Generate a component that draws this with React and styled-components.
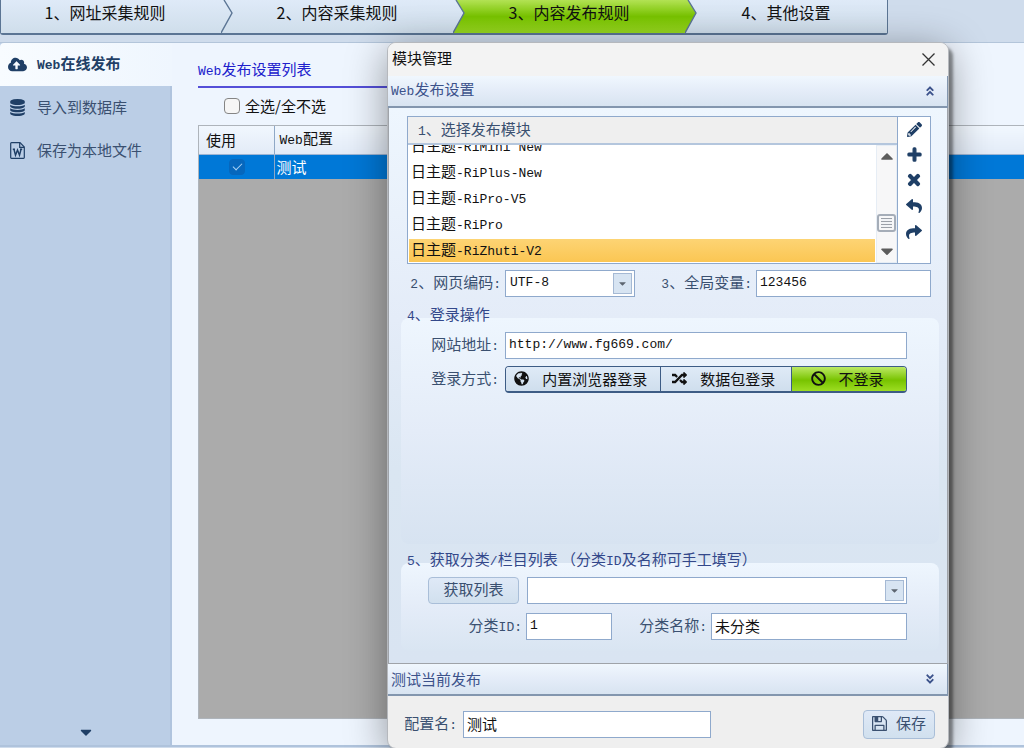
import React from 'react';
import styled, { createGlobalStyle, css } from 'styled-components';
import {
	FaAngleDoubleDown,
	FaAngleDoubleUp,
	FaBan,
	FaCaretDown,
	FaCaretUp,
	FaCloudUploadAlt,
	FaGlobeAmericas,
	FaPencilAlt,
	FaPlus,
	FaRandom,
	FaReply,
	FaShare,
	FaTimes
} from 'react-icons/fa';

const navy = '#1f3f66';
const label = '#3a5070';
const line = '#8fa9cc';
const bar = 'linear-gradient(#f0f7fe, #e4ecf8 50%, #d8e4f1)';

const GlobalStyle = createGlobalStyle`
  * {
    box-sizing: border-box;
  }

  body {
    margin: 0;
    overflow: hidden;
    background: #cfdcec;
    font: 15px/20px "Noto Sans CJK SC", sans-serif;
    color: #111;
  }

  button, input, select {
    font: inherit;
    color: inherit;
  }
`;

const Latin = styled.span`
  font-family: "Liberation Mono", monospace;
  font-size: 13px;
`;

const Page = styled.div`
  position: relative;
  display: flex;
  flex-direction: column;
  min-height: 100vh;
`;

/* wizard steps */

const Steps = styled.nav`
  display: flex;
  align-self: flex-start;
  height: 35px;
  margin-bottom: 7px;
  border: 1px solid #5b7594;
  border-width: 0 1px 2px 1px;
  border-radius: 0 0 3px 3px;
`;

const Step = styled.button`
  width: ${props => (props.$last ? 190 : 220)}px;
  padding: 0 12px 10px 0;
  border: 0;
  font-size: 16px;
  background: ${props =>
		props.$active
			? 'linear-gradient(#b2e254, #78c300 50%, #98d820)'
			: 'linear-gradient(#dfeaf8, #cfdeeb)'};
`;

const Chevron = styled.svg`
  display: block;
  flex: none;
`;

const StepArrow = ({ from, to }) => (
	<Chevron width="12" height="33" viewBox="0 0 12 33">
		<defs>
			<linearGradient id="plain" x1="0" y1="0" x2="0" y2="33" gradientUnits="userSpaceOnUse">
				<stop offset="0" stopColor="#dfeaf8" />
				<stop offset="1" stopColor="#cfdeeb" />
			</linearGradient>
			<linearGradient id="green" x1="0" y1="0" x2="0" y2="33" gradientUnits="userSpaceOnUse">
				<stop offset="0" stopColor="#b2e254" />
				<stop offset="0.5" stopColor="#78c300" />
				<stop offset="1" stopColor="#98d820" />
			</linearGradient>
		</defs>
		<path d="M0 0H12V33H0Z" fill={`url(#${to})`} />
		<path d="M0 0H3L11 13L0 33Z" fill={`url(#${from})`} />
		<path d="M3 0L11 13L0 33" fill="none" stroke="#5b7594" strokeWidth="1.4" />
	</Chevron>
);

/* main window */

const Main = styled.main`
  display: flex;
  flex: 1;
  margin-bottom: 1px;
  border-top: 1px solid #b3c5da;
  border-bottom: 2px solid #afc3dc;
`;

const Sidebar = styled.nav`
  display: flex;
  flex-direction: column;
  width: 172px;
  background: #bbcee6;
  box-shadow: inset -2px 0 #b0c4de;
`;

const SideItem = styled.button`
  display: flex;
  align-items: center;
  gap: 10px;
  height: 43px;
  padding: 0 8px 1px;
  border: 0;
  background: none;
  color: ${label};

  svg {
    width: 19px;
    font-size: 17px;
    color: ${navy};
  }

  ${props =>
		props.$active &&
		css`
      border-radius: 4px 0 0 0;
      background: linear-gradient(90deg, #f8fcff, #eff6fe);
      color: ${navy};
      font-weight: 700;
    `}
`;

const SideMore = styled.button`
  margin-top: auto;
  height: 26px;
  padding: 0;
  border: 0;
  background: none;
  color: ${navy};
  font-size: 18px;
  line-height: 18px;
`;

const Content = styled.section`
  display: flex;
  flex: 1;
  flex-direction: column;
  padding: 15px 0 26px 26px;
  background: #eef5fe;
`;

const ListTitle = styled.h2`
  width: 50%;
  height: 30px;
  margin: 0;
  padding-top: 1px;
  border-bottom: 2px solid #544fd8;
  color: #2020cc;
  font-size: 15px;
  font-weight: 400;
  line-height: 20px;
`;

const CheckAll = styled.label`
  display: flex;
  align-items: center;
  gap: 5px;
  height: 37px;
  padding: 0 0 2px 26px;
`;

const Tick = styled.input`
  display: grid;
  place-items: center;
  width: 16px;
  height: 16px;
  margin: 0;
  appearance: none;
  border: 1px solid #858585;
  border-radius: 4px;
  background: #f6f6f6;

  &:checked {
    border-color: #0667bd;
    background: #0667bd;
  }

  &:checked::before {
    content: "";
    width: 8px;
    height: 4px;
    margin-top: -2px;
    border: solid #a9d2f5;
    border-width: 0 0 1px 1px;
    transform: rotate(-45deg);
  }
`;

const Grid = styled.div`
  flex: 1;
  border: 1px solid #aeb4bb;
  border-width: 1px 0 1px 1px;
  background: #ababab;
`;

const Table = styled.table`
  width: 100%;
  border-collapse: collapse;
  table-layout: fixed;

  th, td {
    padding: 0 2px;
    text-align: left;
    font-weight: 400;
  }

  th {
    padding: 0 5px;
    height: 28px;
    background: linear-gradient(#f1f7fe, #e3ebf7);
    border-bottom: 1px solid #9db4d3;
  }

  th:first-child, td:first-child {
    width: 75px;
    border-right: 1px solid #8fa8c6;
  }

  th:first-child {
    padding-left: 7px;
  }

  td {
    height: 25px;
    background: #0078d7;
    color: #fff;
  }

  td input {
    margin-left: 28px;
  }
`;

/* module dialog */

const Dialog = styled.section`
  position: absolute;
  top: 42px;
  left: 387px;
  width: 562px;
  border: 1px solid #b5b8bd;
  border-radius: 9px;
  background: #efefef;
  box-shadow: 4px 5px 3px rgba(0, 0, 0, 0.4), 0 8px 40px rgba(0, 0, 0, 0.4);
`;

const TitleBar = styled.header`
  display: flex;
  align-items: center;
  justify-content: space-between;
  height: 33px;
  padding: 0 13px 4px 4px;
  border-radius: 8px 8px 0 0;
  background: #f3f3f3;
`;

const CloseButton = styled.button`
  display: flex;
  padding: 3px 0 0;
  border: 0;
  background: none;
`;

const SectionBar = styled.button`
  display: flex;
  align-items: center;
  justify-content: space-between;
  width: 100%;
  height: 32px;
  padding: 0 11px 1px 3px;
  border: solid #8396ae;
  border-width: 0 1px 2px 0;
  background: ${bar};
  color: #3c528b;

  svg {
    font-size: 12px;
  }
`;

const SectionBody = styled.div`
  padding: 8px 8px 7px 12px;
  border: solid #9fa3a9;
  border-width: 0 1px 1px;
  background: linear-gradient(#eef6fe, #e4ecf8 38%, #dae6f2 65%, #d9e4f2);
`;

const ModuleBox = styled.div`
  display: flex;
  height: 148px;
  margin: 0 8px 6px 6px;
  border: 1px solid ${line};
  background: #fff;
`;

const ModulePicker = styled.div`
  display: flex;
  flex: 1;
  flex-direction: column;
  min-width: 0;
`;

const ModuleHeading = styled.div`
  height: 28px;
  padding: 2px 10px;
  border-bottom: 2px solid #b4c6dd;
  background: #efefef;
  color: ${label};
`;

const ModuleScroll = styled.div`
  display: flex;
  flex: 1;
  min-height: 0;
`;

const ModuleList = styled.ul`
  display: flex;
  flex: 1;
  flex-direction: column;
  justify-content: flex-end;
  gap: 3px;
  margin: 0;
  padding: 0 1px 1px;
  overflow: hidden;
  list-style: none;
`;

const ModuleItem = styled.li`
  flex: none;
  height: 23px;
  padding: 0 2px;
  line-height: 20px;
  background: ${props =>
		props['aria-selected'] ? 'linear-gradient(#fdd474, #fbc653)' : 'none'};
`;

const ScrollBar = styled.div`
  display: flex;
  flex-direction: column;
  align-items: center;
  width: 21px;
  padding: 0 0 1px;
  border: 1px solid #e6edf5;
  background: #f7f7f8;
  color: #5c5c5c;

  svg {
    font-size: 20px;
  }
`;

const Thumb = styled.div`
  width: 19px;
  height: 18px;
  margin-top: auto;
  margin-bottom: 9px;
  border: 2px solid #a5adb8;
  border-radius: 3px;
  padding: 2px;
  background: repeating-linear-gradient(#9ba0a8 0 1px, #f1f3f6 1px 3px) content-box #f1f3f6;
`;

const Tools = styled.div`
  display: flex;
  flex-direction: column;
  align-items: center;
  gap: 10px;
  width: 33px;
  padding-top: 5px;
  border-left: 1px solid ${line};
`;

const ToolButton = styled.button`
  display: flex;
  padding: 0;
  border: 0;
  background: none;
  color: ${navy};
  font-size: 16px;
`;

const Row = styled.div`
  display: flex;
  align-items: center;
  gap: ${props => props.$gap || 6}px;
  height: 27px;
  margin-bottom: ${props => props.$after || 7}px;
`;

const OptionsRow = styled(Row)`
  padding: 0 8px 0 6px;
`;

const Label = styled.label`
  flex: none;
  width: ${props => props.$width}px;
  text-align: right;
  color: ${label};
`;

const TextInput = styled.input`
  flex: ${props => (props.$width ? 'none' : '1')};
  width: ${props => (props.$width ? `${props.$width}px` : 'auto')};
  min-width: 0;
  height: 27px;
  padding: 0 3px 3px;
  border: 1px solid ${line};
  border-radius: 0;
  outline: 0;
  background: #fff;
  font-size: ${props => (props.$cjk ? 15 : 13)}px;
  font-family: ${props =>
		props.$cjk ? 'inherit' : '"Liberation Mono", monospace'};
`;

const Combo = styled.div`
  position: relative;
  display: flex;
  flex: ${props => (props.$width ? 'none' : '1')};
  width: ${props => (props.$width ? `${props.$width}px` : 'auto')};

  select {
    width: 100%;
    height: 27px;
    padding: 0 4px 2px;
    border: 1px solid ${line};
    border-radius: 0;
    appearance: none;
    background: #fff;
    font: 13px "Liberation Mono", monospace;
  }

  svg {
    position: absolute;
    top: 3px;
    right: 3px;
    width: 19px;
    height: 21px;
    padding: 4px;
    border: 1px solid #a5b9d4;
    background: #d7e4f2;
    color: #5d6570;
    pointer-events: none;
  }
`;

const Group = styled.fieldset`
  min-width: 0;
  min-height: ${props => props.$height}px;
  margin: 0 0 5px;
  padding: 1px 32px 0 0;
  border: 0;
  border-radius: 8px;
  background: ${props => props.$fill};
`;

const Legend = styled.legend`
  padding: 0 6px 4px;
  color: #33488a;
  line-height: 20px;
`;

const Segments = styled.div`
  display: flex;
  flex: 1;
  height: 27px;
  border: 1px solid #3d5c85;
  border-bottom-width: 2px;
  border-radius: 4px;
  overflow: hidden;
`;

const Segment = styled.button`
  display: flex;
  flex: ${props => props.$grow} 1 0;
  align-items: center;
  justify-content: center;
  gap: 13px;
  padding: 0 4px 1px 0;
  border: 0;
  white-space: nowrap;
  background: ${props =>
		props['aria-pressed']
			? 'linear-gradient(#bce964, #78c300 55%, #9ddd22)'
			: 'linear-gradient(#dfeaf7, #cfdeed)'};

  & + & {
    border-left: 1px solid #3d5c85;
  }

  svg {
    flex: none;
    font-size: 15px;
  }
`;

const SoftButton = styled.button`
  display: flex;
  flex: none;
  align-items: center;
  justify-content: center;
  gap: 9px;
  width: ${props => props.$width}px;
  height: 27px;
  padding: 0 0 3px;
  border: 1px solid #a9bed8;
  border-radius: 4px;
  background: linear-gradient(#dfe9f7, #d1e0ee);
  color: ${label};
`;

const FetchButton = styled(SoftButton)`
  margin-left: 27px;
`;

const Footer = styled.footer`
  display: flex;
  align-items: center;
  gap: 6px;
  height: 52px;
  padding: 5px 13px 0 13px;

  ${SoftButton} {
    height: 29px;
    margin-left: auto;
  }
`;

const CloseIcon = () => (
	<svg width="13" height="13" viewBox="0 0 13 13">
		<path d="M.5 .5L12.500 12.500M12.500 .5L.5 12.500" fill="none" stroke="#333" strokeWidth="1.300" />
	</svg>
);

const DatabaseIcon = () => (
	<svg height="17" viewBox="0 0 1536 1792" fill="currentColor">
		<path d="M768 768q237 0 443-43t325-127v170q0 69-103 128t-280 93.500-385 34.500-385-34.500-280-93.500-103-128v-170q119 84 325 127t443 43zM768 1536q237 0 443-43t325-127v170q0 69-103 128t-280 93.500-385 34.500-385-34.500-280-93.500-103-128v-170q119 84 325 127t443 43zM768 1152q237 0 443-43t325-127v170q0 69-103 128t-280 93.500-385 34.500-385-34.500-280-93.500-103-128v-170q119 84 325 127t443 43zM768 0q208 0 385 34.500t280 93.500 103 128v128q0 69-103 128t-280 93.500-385 34.500-385-34.500-280-93.500-103-128v-128q0-69 103-128t280-93.500 385-34.500z" />
	</svg>
);

const DocumentIcon = () => (
	<svg height="17" viewBox="0 0 15 17" fill="none" stroke="currentColor">
		<path d="M.7 1.500Q.7 .7 1.500 .7H10L14.300 5V15.500Q14.300 16.300 13.500 16.300H1.500Q.7 16.300 .7 15.500Z" strokeWidth="1.200" />
		<path d="M9.700 1V5.300H14" strokeWidth="1.200" />
		<path d="M2.800 7.300H5M10 7.300H12.200M4 7.500L5.500 13.300L7.500 8L9.500 13.300L11 7.500" strokeWidth="1.400" />
	</svg>
);

const SaveIcon = () => (
	<svg width="15" height="15" viewBox="0 128 1536 1536" fill="currentColor">
		<path d="M384 1536h768v-384h-768v384zM1280 1536h128v-896q0-14-10-38.500t-20-34.500l-281-281q-10-10-34-20t-39-10v416q0 40-28 68t-68 28h-576q-40 0-68-28t-28-68v-416h-128v1280h128v-416q0-40 28-68t68-28h832q40 0 68 28t28 68v416zM896 608v-320q0-13-9.500-22.500t-22.500-9.500h-192q-13 0-22.500 9.500t-9.500 22.500v320q0 13 9.500 22.500t22.500 9.500h192q13 0 22.500-9.500t9.500-22.500zM1536 640v928q0 40-28 68t-68 28h-1344q-40 0-68-28t-28-68v-1344q0-40 28-68t68-28h928q40 0 88 20t76 48l280 280q28 28 48 76t20 88z" />
	</svg>
);

const modules = ['RiMini New', 'RiPlus-New', 'RiPro-V5', 'RiPro', 'RiZhuti-V2'];

const ModuleSelect = () => (
	<ModuleBox>
		<ModulePicker>
			<ModuleHeading id="modules">
				<Latin>1</Latin>、选择发布模块
			</ModuleHeading>
			<ModuleScroll>
				<ModuleList role="listbox" aria-labelledby="modules">
					{modules.map(name => (
						<ModuleItem key={name} role="option" aria-selected={name === 'RiZhuti-V2'}>
							日主题<Latin>-{name}</Latin>
						</ModuleItem>
					))}
				</ModuleList>
				<ScrollBar>
					<FaCaretUp />
					<Thumb />
					<FaCaretDown />
				</ScrollBar>
			</ModuleScroll>
		</ModulePicker>
		<Tools>
			<ToolButton aria-label="编辑"><FaPencilAlt size={15} /></ToolButton>
			<ToolButton aria-label="添加"><FaPlus size={15} stroke="currentColor" strokeWidth={40} /></ToolButton>
			<ToolButton aria-label="删除"><FaTimes stroke="currentColor" strokeWidth={40} /></ToolButton>
			<ToolButton aria-label="导入"><FaReply /></ToolButton>
			<ToolButton aria-label="导出"><FaShare /></ToolButton>
		</Tools>
	</ModuleBox>
);

const LoginGroup = () => (
	<Group $height={240} $fill="linear-gradient(#eef6fe, #e4ecf8 50%, #d7e3f1)">
		<Legend><Latin>4</Latin>、登录操作</Legend>
		<Row>
			<Label htmlFor="site" $width={98}>网站地址<Latin>:</Latin></Label>
			<TextInput id="site" defaultValue="http://www.fg669.com/" />
		</Row>
		<Row>
			<Label as="span" id="login" $width={98}>登录方式<Latin>:</Latin></Label>
			<Segments role="group" aria-labelledby="login">
				<Segment $grow={155} aria-pressed={false}><FaGlobeAmericas />内置浏览器登录</Segment>
				<Segment $grow={131} aria-pressed={false}><FaRandom />数据包登录</Segment>
				<Segment $grow={114} aria-pressed={true}><FaBan />不登录</Segment>
			</Segments>
		</Row>
	</Group>
);

const CategoryGroup = () => (
	<Group $height={102} $fill="linear-gradient(#eef6fe, #e4ecf8 50%, #d9e5f2)">
		<Legend>
			<Latin>5</Latin>、获取分类<Latin>/</Latin>栏目列表 （分类<Latin>ID</Latin>及名称可手工填写）
		</Legend>
		<Row $gap={8} $after={9}>
			<FetchButton $width={91}>获取列表</FetchButton>
			<Combo>
				<select aria-label="栏目列表" />
				<FaCaretDown />
			</Combo>
		</Row>
		<Row $gap={4}>
			<Label htmlFor="cat-id" $width={121}>分类<Latin>ID:</Latin></Label>
			<TextInput id="cat-id" $width={86} defaultValue="1" />
			<Label htmlFor="cat-name" $width={91}>分类名称<Latin>:</Latin></Label>
			<TextInput id="cat-name" $cjk defaultValue="未分类" />
		</Row>
	</Group>
);

const ModuleDialog = () => (
	<Dialog role="dialog" aria-label="模块管理">
		<TitleBar>
			模块管理
			<CloseButton aria-label="关闭"><CloseIcon /></CloseButton>
		</TitleBar>
		<SectionBar aria-expanded={true}>
			<span><Latin>Web</Latin>发布设置</span>
			<FaAngleDoubleUp />
		</SectionBar>
		<SectionBody>
			<ModuleSelect />
			<OptionsRow $gap={4}>
				<Label htmlFor="charset" $width={94}><Latin>2</Latin>、网页编码<Latin>:</Latin></Label>
				<Combo $width={130}>
					<select id="charset"><option>UTF-8</option></select>
					<FaCaretDown />
				</Combo>
				<Label htmlFor="vars" $width={113}><Latin>3</Latin>、全局变量<Latin>:</Latin></Label>
				<TextInput id="vars" defaultValue="123456" />
			</OptionsRow>
			<LoginGroup />
			<CategoryGroup />
		</SectionBody>
		<SectionBar aria-expanded={false}>
			测试当前发布
			<FaAngleDoubleDown />
		</SectionBar>
		<Footer>
			<Label htmlFor="config" $width={56}>配置名<Latin>:</Latin></Label>
			<TextInput id="config" $cjk $width={248} defaultValue="测试" />
			<SoftButton $width={72}><SaveIcon />保存</SoftButton>
		</Footer>
	</Dialog>
);

const App = () => (
	<Page>
		<GlobalStyle />
		<Steps>
			<Step>1、网址采集规则</Step>
			<StepArrow from="plain" to="plain" />
			<Step>2、内容采集规则</Step>
			<StepArrow from="plain" to="green" />
			<Step $active>3、内容发布规则</Step>
			<StepArrow from="green" to="plain" />
			<Step $last>4、其他设置</Step>
		</Steps>
		<Main>
			<Sidebar>
				<SideItem $active>
					<FaCloudUploadAlt />
					<span><Latin>Web</Latin>在线发布</span>
				</SideItem>
				<SideItem><DatabaseIcon />导入到数据库</SideItem>
				<SideItem><DocumentIcon />保存为本地文件</SideItem>
				<SideMore aria-label="更多"><FaCaretDown /></SideMore>
			</Sidebar>
			<Content>
				<ListTitle><Latin>Web</Latin>发布设置列表</ListTitle>
				<CheckAll>
					<Tick type="checkbox" />
					全选/全不选
				</CheckAll>
				<Grid>
					<Table>
						<thead>
							<tr>
								<th>使用</th>
								<th><Latin>Web</Latin>配置</th>
							</tr>
						</thead>
						<tbody>
							<tr>
								<td><Tick type="checkbox" defaultChecked aria-label="使用" /></td>
								<td>测试</td>
							</tr>
						</tbody>
					</Table>
				</Grid>
			</Content>
		</Main>
		<ModuleDialog />
	</Page>
);

export default App;
